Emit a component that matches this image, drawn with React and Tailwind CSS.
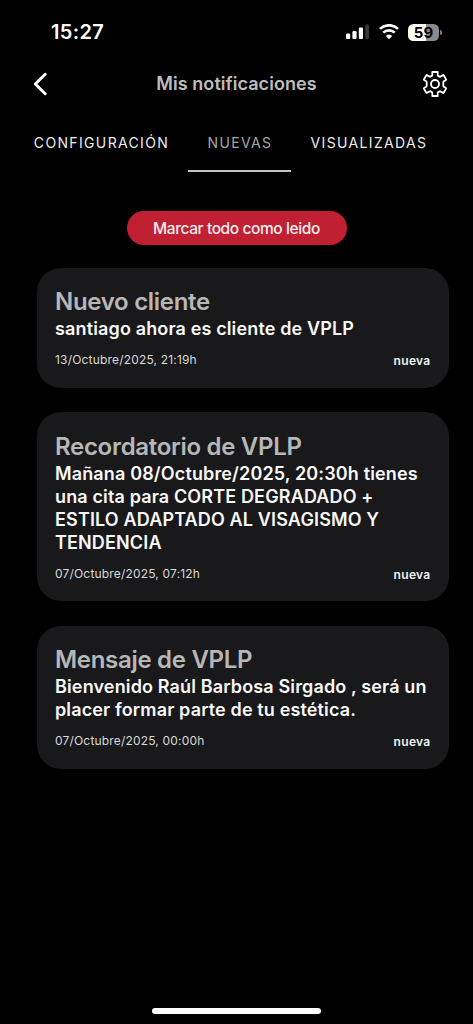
const notifications = [
  {
    title: "Nuevo cliente",
    lines: ["santiago ahora es cliente de VPLP"],
    date: "13/Octubre/2025, 21:19h",
  },
  {
    title: "Recordatorio de VPLP",
    lines: [
      "Mañana 08/Octubre/2025, 20:30h tienes",
      "una cita para CORTE DEGRADADO +",
      "ESTILO ADAPTADO AL VISAGISMO Y",
      "TENDENCIA",
    ],
    date: "07/Octubre/2025, 07:12h",
  },
  {
    title: "Mensaje de VPLP",
    lines: ["Bienvenido Raúl Barbosa Sirgado , será un", "placer formar parte de tu estética."],
    date: "07/Octubre/2025, 00:00h",
  },
];

function StatusBar() {
  return (
    <div className="flex h-16 items-center pl-[51px] pr-[31px]">
      <span className="text-[20px] font-semibold leading-6 tracking-[0.35px]">15:27</span>
      <div className="ml-auto flex items-center gap-[9px]">
        <svg className="h-4 w-6" viewBox="0 0 24 16" fill="white">
          <rect x="0" y="9.5" width="4.2" height="5.5" rx="1.2" />
          <rect x="6.4" y="7" width="4.2" height="8" rx="1.2" />
          <rect x="12.8" y="3.5" width="4.2" height="11.5" rx="1.2" />
          <rect x="19.2" y="0.4" width="3.8" height="14.6" rx="1.2" fill="#3a3a3a" />
        </svg>
        <svg className="h-4 w-5" viewBox="0 0 20 16" fill="none" stroke="white" strokeWidth="2.7">
          <path d="M1 4.9a13 13 0 0 1 18 0" />
          <path d="M4.3 8.6a8.2 8.2 0 0 1 11.4 0" />
          <path d="M10 15.3l-3.2-3.4a4.7 4.7 0 0 1 6.4 0z" fill="white" stroke="none" />
        </svg>
        <div className="flex items-center gap-px">
          <div className="flex h-[17px] w-[31px] items-center justify-center rounded-[5.5px] bg-linear-to-r from-white from-59% to-[#8b8b8b] to-59% text-[15px] font-bold leading-none text-black">
            59
          </div>
          <div className="h-[5px] w-[2px] rounded-r-full bg-[#7d7d7d]" />
        </div>
      </div>
    </div>
  );
}

function Header() {
  return (
    <header className="flex h-10 items-center justify-between pl-[33px] pr-[25px]">
      <svg className="h-6 w-[18px]" viewBox="0 0 18 24" fill="none" stroke="white" strokeWidth="3" strokeLinecap="round" strokeLinejoin="round">
        <path d="M12.2 2.3 2.3 12l9.9 9.7" />
      </svg>
      <h1 className="text-[18px] font-semibold leading-6 tracking-[0.06px] text-[#bdbdbd]">Mis notificaciones</h1>
      <svg className="h-[26px] w-[26px]" viewBox="0 0 26 26" fill="none" stroke="white" strokeWidth="1.8" strokeLinejoin="round">
        <path d="M10.3 1h5.4v3.2q0 .5.5.7l1.2.7q.5.3 1 0l2.7-1.500q.4-.2.6.2l2.400 4.100q.2.400-.2.600l-2.100 1.300q-.5.300-.5.900v3.600q0 .6.500.9l2.100 1.300q.4.200.2.600l-2.400 4.100q-.2.400-.6.200l-2.700-1.500q-.5-.3-1 0l-1.200.7q-.5.200-.5.700V25h-5.400v-3.200q0-.5-.5-.7l-1.200-.7q-.5-.3-1 0l-2.700 1.500q-.4.200-.6-.2l-2.400-4.100q-.2-.4.200-.6l2.100-1.300q.5-.3.500-.9v-3.600q0-.6-.5-.9L2.100 9q-.4-.2-.2-.6l2.400-4.100q.2-.4.600-.2l2.700 1.500q.5.300 1 0l1.200-.7q.5-.2.500-.7z" />
        <circle cx="13" cy="13" r="4" />
      </svg>
    </header>
  );
}

function Tabs() {
  return (
    <nav className="flex h-[68px] pl-[14px] text-[14px] leading-5 tracking-[1.35px] text-[#ededed]">
      <span className="flex w-[174px] justify-center pl-px pt-[29px]">CONFIGURACIÓN</span>
      <span className="flex w-[103px] justify-center border-b-2 border-[#c4c4c4] pl-px pt-[29px] text-[#a6a6a6]">NUEVAS</span>
      <span className="flex w-[156px] justify-center pt-[29px]">VISUALIZADAS</span>
    </nav>
  );
}

function Card({ title, lines, date }) {
  return (
    <article className="rounded-[24px] bg-[#19191b] pb-[19.5px] pl-[18.5px] pr-[18px] pt-[19.5px]">
      <h2 className="text-[24px] font-semibold leading-[30px] tracking-[-0.3px] text-[#b7b7b8]">{title}</h2>
      <p className="whitespace-nowrap text-[18px] font-semibold leading-[23px] tracking-[0.14px] text-[#f8f8f8]">
        {lines.map((line) => (
          <span key={line} className="block">{line}</span>
        ))}
      </p>
      <div className="mt-3 flex h-4 items-center justify-between text-[12px] leading-4">
        <time className="tracking-[0.18px] text-[#d8d8d8]">{date}</time>
        <span className="pt-0.5 font-semibold tracking-[0.3px] text-[#f0f0f0]">nueva</span>
      </div>
    </article>
  );
}

export default function App() {
  return (
    <main className="flex h-[1024px] w-[473px] flex-col overflow-hidden bg-black font-['Inter',sans-serif] text-white">
      <StatusBar />
      <Header />
      <Tabs />
      <button className="mt-[39px] h-[34px] w-[220px] shrink-0 self-center rounded-full bg-[#c02032] pt-px text-[15.5px] font-medium leading-5 tracking-[-0.4px] text-[#fbeeee]">
        Marcar todo como leido
      </button>
      <section className="mt-[22.5px] flex flex-col gap-[24.5px] pl-[36.5px] pr-[24.5px]">
        {notifications.map((item) => (
          <Card key={item.title} {...item} />
        ))}
      </section>
      <div className="mb-[10px] mt-auto h-[6px] w-[169px] self-center rounded-full bg-white" />
    </main>
  );
}
